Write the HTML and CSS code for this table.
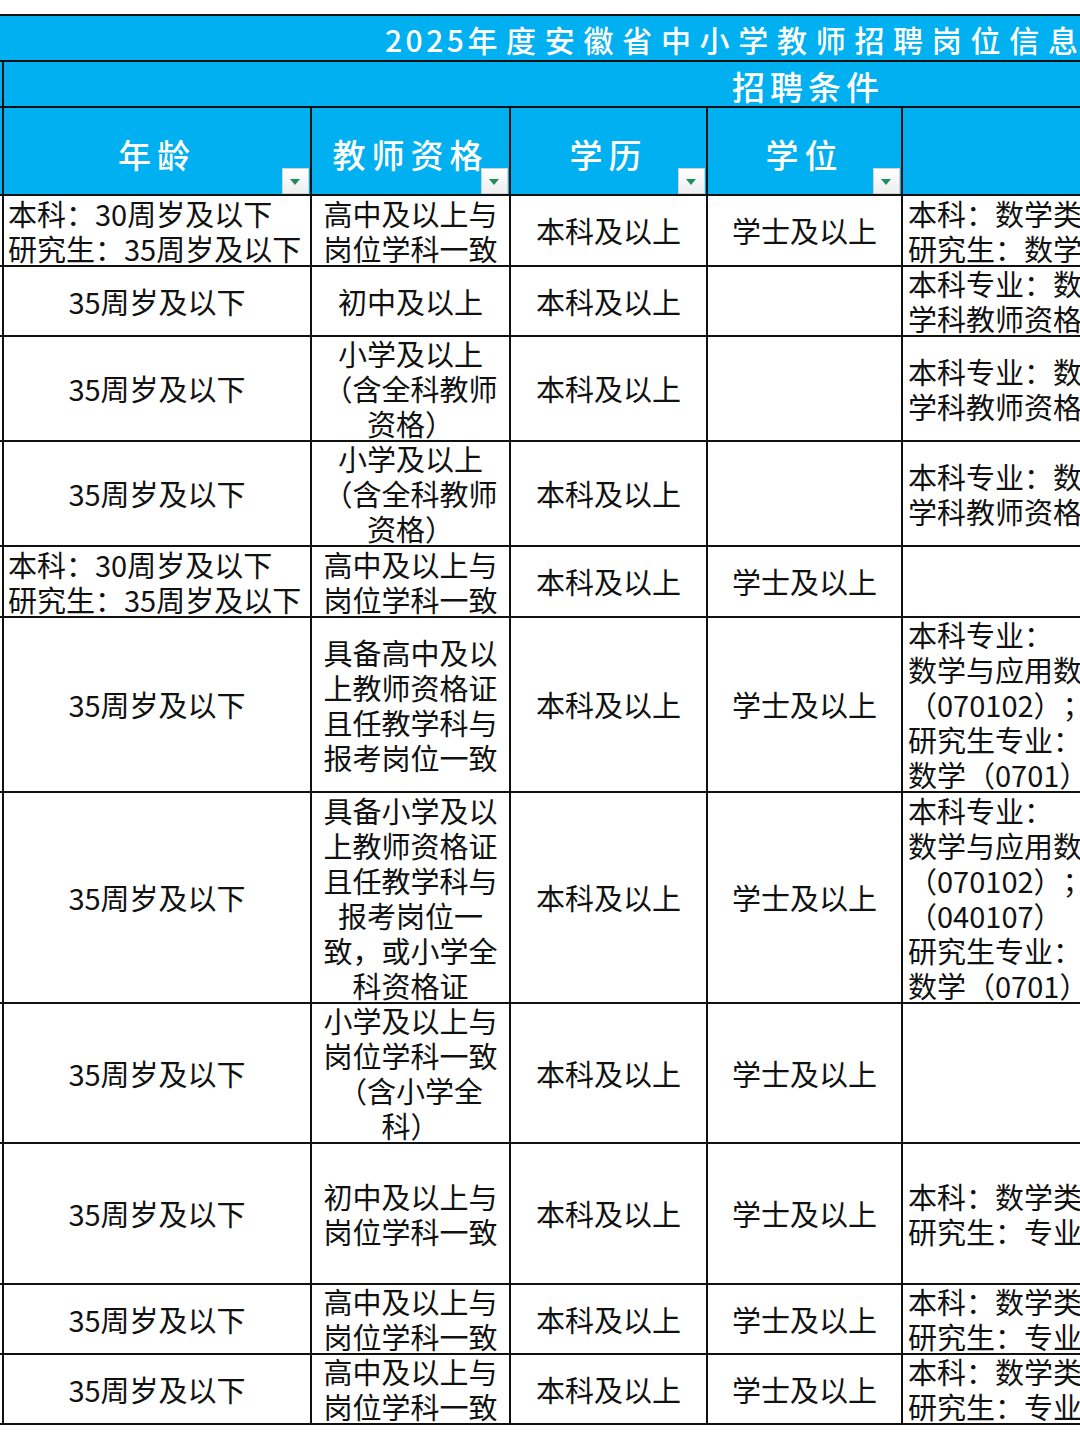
FILE: index.html
```html
<!DOCTYPE html>
<html lang="zh-CN">
<head>
<meta charset="utf-8">
<title>2025年度安徽省中小学教师招聘岗位信息表</title>
<link rel="stylesheet" href="styles.css">
</head>
<body>
<div class="sheet">
  <div class="row title-row">
    <div class="title"><span class="yr">2025</span>年度安徽省中小学教师招聘岗位信息表</div>
  </div>
  <div class="row group-row">
    <div class="group">招聘条件</div>
  </div>
  <div class="row head-row">
    <div class="cell c1 hd"><span>年龄</span><i class="flt"></i></div>
    <div class="cell c2 hd"><span>教师资格</span><i class="flt"></i></div>
    <div class="cell c3 hd"><span>学历</span><i class="flt"></i></div>
    <div class="cell c4 hd"><span>学位</span><i class="flt"></i></div>
    <div class="cell c5 hd"></div>
  </div>

  <div class="row h71">
    <div class="cell c1 left"><p>本科：30周岁及以下<br>研究生：35周岁及以下</p></div>
    <div class="cell c2"><p>高中及以上与<br>岗位学科一致</p></div>
    <div class="cell c3"><p>本科及以上</p></div>
    <div class="cell c4"><p>学士及以上</p></div>
    <div class="cell c5"><p>本科：数学类（0701）<br>研究生：数学（0701）</p></div>
  </div>

  <div class="row h70">
    <div class="cell c1"><p>35周岁及以下</p></div>
    <div class="cell c2"><p>初中及以上</p></div>
    <div class="cell c3"><p>本科及以上</p></div>
    <div class="cell c4"></div>
    <div class="cell c5"><p>本科专业：数学类；研究生专业：数学；具备初中及以上数<br>学科教师资格证</p></div>
  </div>

  <div class="row h105">
    <div class="cell c1"><p>35周岁及以下</p></div>
    <div class="cell c2"><p>小学及以上<br>（含全科教师<br>资格）</p></div>
    <div class="cell c3"><p>本科及以上</p></div>
    <div class="cell c4"></div>
    <div class="cell c5"><p>本科专业：数学类；研究生专业：数学；具备小学及以上数<br>学科教师资格证</p></div>
  </div>

  <div class="row h105">
    <div class="cell c1"><p>35周岁及以下</p></div>
    <div class="cell c2"><p>小学及以上<br>（含全科教师<br>资格）</p></div>
    <div class="cell c3"><p>本科及以上</p></div>
    <div class="cell c4"></div>
    <div class="cell c5"><p>本科专业：数学类；研究生专业：数学；具备小学及以上数<br>学科教师资格证</p></div>
  </div>

  <div class="row h71">
    <div class="cell c1 left"><p>本科：30周岁及以下<br>研究生：35周岁及以下</p></div>
    <div class="cell c2"><p>高中及以上与<br>岗位学科一致</p></div>
    <div class="cell c3"><p>本科及以上</p></div>
    <div class="cell c4"><p>学士及以上</p></div>
    <div class="cell c5"></div>
  </div>

  <div class="row h175">
    <div class="cell c1"><p>35周岁及以下</p></div>
    <div class="cell c2"><p>具备高中及以<br>上教师资格证<br>且任教学科与<br>报考岗位一致</p></div>
    <div class="cell c3"><p>本科及以上</p></div>
    <div class="cell c4"><p>学士及以上</p></div>
    <div class="cell c5"><p>本科专业：<br>数学与应用数学<br>（070102）；<br>研究生专业：<br>数学（0701）</p></div>
  </div>

  <div class="row h211">
    <div class="cell c1"><p>35周岁及以下</p></div>
    <div class="cell c2"><p>具备小学及以<br>上教师资格证<br>且任教学科与<br>报考岗位一<br>致，或小学全<br>科资格证</p></div>
    <div class="cell c3"><p>本科及以上</p></div>
    <div class="cell c4"><p>学士及以上</p></div>
    <div class="cell c5"><p>本科专业：<br>数学与应用数学<br>（070102）；小学教育<br>（040107）<br>研究生专业：<br>数学（0701）</p></div>
  </div>

  <div class="row h140">
    <div class="cell c1"><p>35周岁及以下</p></div>
    <div class="cell c2"><p>小学及以上与<br>岗位学科一致<br>（含小学全<br>科）</p></div>
    <div class="cell c3"><p>本科及以上</p></div>
    <div class="cell c4"><p>学士及以上</p></div>
    <div class="cell c5"></div>
  </div>

  <div class="row h141">
    <div class="cell c1"><p>35周岁及以下</p></div>
    <div class="cell c2"><p>初中及以上与<br>岗位学科一致</p></div>
    <div class="cell c3"><p>本科及以上</p></div>
    <div class="cell c4"><p>学士及以上</p></div>
    <div class="cell c5"><p>本科：数学类（0701）<br>研究生：专业不限</p></div>
  </div>

  <div class="row h70">
    <div class="cell c1"><p>35周岁及以下</p></div>
    <div class="cell c2"><p>高中及以上与<br>岗位学科一致</p></div>
    <div class="cell c3"><p>本科及以上</p></div>
    <div class="cell c4"><p>学士及以上</p></div>
    <div class="cell c5"><p>本科：数学类（0701）<br>研究生：专业不限</p></div>
  </div>

  <div class="row h70">
    <div class="cell c1"><p>35周岁及以下</p></div>
    <div class="cell c2"><p>高中及以上与<br>岗位学科一致</p></div>
    <div class="cell c3"><p>本科及以上</p></div>
    <div class="cell c4"><p>学士及以上</p></div>
    <div class="cell c5"><p>本科：数学类（0701）<br>研究生：专业不限</p></div>
  </div>
</div>
</body>
</html>
```

FILE: styles.css
```css
html, body {
  margin: 0;
  padding: 0;
  background: #ffffff;
  overflow: hidden;
}

body {
  width: 1080px;
  height: 1439px;
  font-family: "Noto Sans CJK SC", "Noto Sans", sans-serif;
  color: #111111;
  text-spacing-trim: space-all;
}

.sheet {
  padding-top: 14px;
  width: 1700px;
}

.row {
  display: flex;
  box-sizing: border-box;
  border-bottom: 2px solid #111111;
  padding-left: 2px;
}

/* ---- top banner rows ---- */
.title-row {
  height: 48px;
  padding-left: 0;
  border-top: 2px solid #111111;
  background: #00b0f0;
}

.title {
  padding: 3px 0 0 385px;
  font-size: 30px;
  font-weight: 500;
  line-height: 40px;
  letter-spacing: 8.7px;
  color: #ffffff;
  white-space: nowrap;
}

.yr {
  letter-spacing: 3.5px;
}

.group-row {
  height: 46px;
  background: #00b0f0;
}

.group {
  flex: 1;
  border-left: 2px solid #111111;
  padding: 6px 0 0 728px;
  font-size: 33px;
  font-weight: 500;
  line-height: 36px;
  letter-spacing: 5px;
  color: #ffffff;
  white-space: nowrap;
}

/* ---- header row ---- */
.head-row {
  height: 88px;
  background: #00b0f0;
}

.cell {
  position: relative;
  box-sizing: border-box;
  display: flex;
  align-items: center;
  justify-content: center;
  text-align: center;
  overflow: hidden;
  border-right: 2px solid #111111;
  font-size: 29px;
  line-height: 35px;
}

.cell p {
  margin: 0;
  white-space: nowrap;
}

.c1 { width: 310px; border-left: 2px solid #111111; }
.c2 { width: 199px; }
.c3 { width: 197px; }
.c4 { width: 195px; }
.c5 {
  flex: 1;
  justify-content: flex-start;
  text-align: left;
  padding-left: 5px;
  border-right: none;
}

.left {
  justify-content: flex-start;
  text-align: left;
  padding-left: 4px;
}

.hd {
  padding-top: 6px;
  font-size: 33px;
  font-weight: 500;
  letter-spacing: 6px;
  color: #ffffff;
}

.flt {
  position: absolute;
  right: 1px;
  bottom: 0;
  width: 27px;
  height: 26px;
  box-sizing: border-box;
  border: 1px solid #cfd3d6;
  background: linear-gradient(#ffffff, #eceeef);
}

.flt::after {
  content: "";
  position: absolute;
  left: 7px;
  top: 10px;
  border-left: 5.5px solid transparent;
  border-right: 5.5px solid transparent;
  border-top: 6px solid #1f8f5a;
}

/* ---- data row heights ---- */
.h70 { height: 70px; }
.h71 { height: 71px; }
.h105 { height: 105px; }
.h140 { height: 140px; }
.h141 { height: 141px; }
.h175 { height: 175px; }
.h211 { height: 211px; }
```
